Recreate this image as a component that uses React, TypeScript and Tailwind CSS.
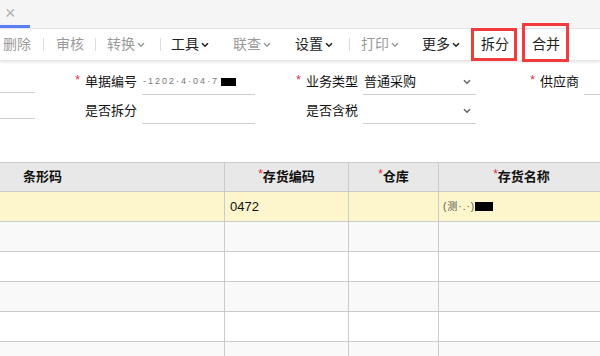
import React from 'react';

const font = { fontFamily: '"Liberation Sans", "Noto Sans CJK SC", sans-serif' };

const Chevron: React.FC<{ className?: string }> = ({ className = '' }) => (
  <svg className={className} width="8" height="6" viewBox="0 0 8 6" fill="none">
    <path d="M1 1.2l3 3 3-3" stroke="currentColor" strokeWidth="1.6" />
  </svg>
);

const Sep: React.FC<{ ml: string }> = ({ ml }) => <div className={`w-px h-[13px] bg-[#dcdcdc] shrink-0 ${ml}`} />;

const ToolItem: React.FC<{ label: string; muted?: boolean; menu?: boolean; ml: string }> = ({
  label,
  muted,
  menu,
  ml,
}) => (
  <div
    className={`flex items-center gap-[2px] shrink-0 text-[14px] ${muted ? 'text-[#9a9a9a]' : 'text-[#222]'} ${ml}`}
  >
    <span>{label}</span>
    {menu && <Chevron />}
  </div>
);

const Req = () => <span className="text-[#e6283c] text-[12px] leading-none relative -top-[2px]">*</span>;

const Field: React.FC<{
  label: string;
  required?: boolean;
  labelW: string;
  inputW: string;
  select?: boolean;
  children?: React.ReactNode;
}> = ({ label, required, labelW, inputW, select, children }) => (
  <div className="flex items-center h-[29px] shrink-0">
    <div className={`flex items-center justify-end gap-[5px] shrink-0 ${labelW}`}>
      {required && <Req />}
      <span className="text-[13px] text-[#111] whitespace-nowrap">{label}</span>
    </div>
    <div
      className={`ml-[5px] h-[24px] mt-[2px] shrink-0 flex items-center border-b border-[#cfcfcf] ${inputW} ${select ? 'pr-[4px]' : ''}`}
    >
      {children}
      {select && <Chevron className="text-[#666] w-[10px] ml-auto" />}
    </div>
  </div>
);

const HeadCell: React.FC<{ label: string; required?: boolean; align?: string; border?: boolean }> = ({
  label,
  required,
  align = 'justify-center',
  border = true,
}) => (
  <div
    className={`flex items-center ${align} h-full text-[13px] font-bold text-[#111] ${border ? 'border-r border-[#cbcbcb]' : ''}`}
  >
    {required && <span className="text-[#e6283c] font-normal text-[12px] relative -top-[3px]">*</span>}
    <span>{label}</span>
  </div>
);

export default function App() {
  const rows = [0, 1, 2, 3, 4, 5];
  return (
    <div className="w-[600px] h-[356px] overflow-hidden bg-white relative" style={font}>
      {/* tab strip */}
      <div className="h-[29px] bg-[#f5f5f5] border-b border-[#e6e6e6] flex">
        <div className="w-[30px] h-full flex flex-col">
          <div className="flex-1 flex items-center text-[#b0b0b0] text-[18px] leading-none pl-[5px] pt-[1px]">
            ×
          </div>
          <div className="h-[3px] bg-[#5b7ff0]" />
        </div>
      </div>

      {/* toolbar */}
      <div className="h-[31px] bg-white flex items-center shadow-[0_2px_3px_rgba(0,0,0,0.12)] relative z-10">
        <ToolItem label="删除" muted ml="ml-[3px]" />
        <Sep ml="ml-[12px]" />
        <ToolItem label="审核" muted ml="ml-[12px]" />
        <Sep ml="ml-[11px]" />
        <ToolItem label="转换" muted menu ml="ml-[11px]" />
        <Sep ml="ml-[15px]" />
        <ToolItem label="工具" menu ml="ml-[10px]" />
        <ToolItem label="联查" muted menu ml="ml-[24px]" />
        <ToolItem label="设置" menu ml="ml-[24px]" />
        <Sep ml="ml-[16px]" />
        <ToolItem label="打印" muted menu ml="ml-[11px]" />
        <ToolItem label="更多" menu ml="ml-[23px]" />
        <div className="ml-[11px] shrink-0 w-[46px] h-[33px] mt-[-1px] border-[3px] border-[#f03c3c] flex items-center justify-center text-[14px] text-[#222] pt-[1px] pl-[2px]">
          拆分
        </div>
        <div className="ml-[5px] shrink-0 w-[47px] h-[39px] mt-[-4px] border-[3px] border-[#f03c3c] flex items-center justify-center text-[14px] text-[#222] pt-[3px] pl-[1px]">
          合并
        </div>
      </div>

      {/* form */}
      <div className="pt-[7px] flex overflow-hidden">
        <div className="w-[35px] shrink-0 flex flex-col">
          <div className="h-[29px] flex items-end"><div className="w-full h-[24px] mb-[3px] border-b border-[#cfcfcf]" /></div>
          <div className="h-[29px] flex items-end"><div className="w-full h-[24px] mb-[6px] border-b border-[#cfcfcf]" /></div>
        </div>
        <div className="flex flex-col shrink-0">
          <Field label="单据编号" required labelW="w-[102px]" inputW="w-[113px]">
            <span className="text-[9px] text-[#777] tracking-[2px] whitespace-nowrap pl-[1px]">-1202·4·04·7</span>
            <span className="inline-block w-[15px] h-[8px] bg-black ml-[2px]" />
          </Field>
          <Field label="是否拆分" labelW="w-[102px]" inputW="w-[113px]" />
        </div>
        <div className="flex flex-col shrink-0">
          <Field label="业务类型" required labelW="w-[103px]" inputW="w-[113px]" select>
            <span className="text-[13px] text-[#111] pl-[1px]">普通采购</span>
          </Field>
          <Field label="是否含税" labelW="w-[103px]" inputW="w-[113px]" select />
        </div>
        <div className="flex flex-col shrink-0">
          <Field label="供应商" required labelW="w-[103px]" inputW="w-[30px]" />
        </div>
      </div>

      {/* table */}
      <div className="absolute left-0 top-[162px] w-[604px]">
        <div className="grid grid-cols-[225px_124px_90px_165px] h-[30px] bg-[#e8e8e8] border-y border-[#cbcbcb]">
          <HeadCell label="条形码" align="justify-start pl-[23px]" />
          <HeadCell label="存货编码" required />
          <HeadCell label="仓库" required />
          <HeadCell label="存货名称" required border={false} />
        </div>
        {rows.map((r) => (
          <div
            key={r}
            className={`grid grid-cols-[225px_124px_90px_165px] h-[30px] border-b border-[#cbcbcb] ${
              r === 0 ? 'bg-[#fdf5cb]' : r % 2 === 1 ? 'bg-[#f9f9f9]' : 'bg-white'
            }`}
          >
            <div className="border-r border-[#cbcbcb]" />
            <div className="border-r border-[#cbcbcb] flex items-center pl-[5px] text-[13px] text-[#111]">
              {r === 0 ? '0472' : ''}
            </div>
            <div className="border-r border-[#cbcbcb]" />
            <div className="flex items-center pl-[4px]">
              {r === 0 && (
                <>
                  <span className="text-[10px] text-[#555] tracking-[1px]">(测·.·)</span>
                  <span className="inline-block w-[18px] h-[9px] bg-black" />
                </>
              )}
            </div>
          </div>
        ))}
      </div>
    </div>
  );
}
